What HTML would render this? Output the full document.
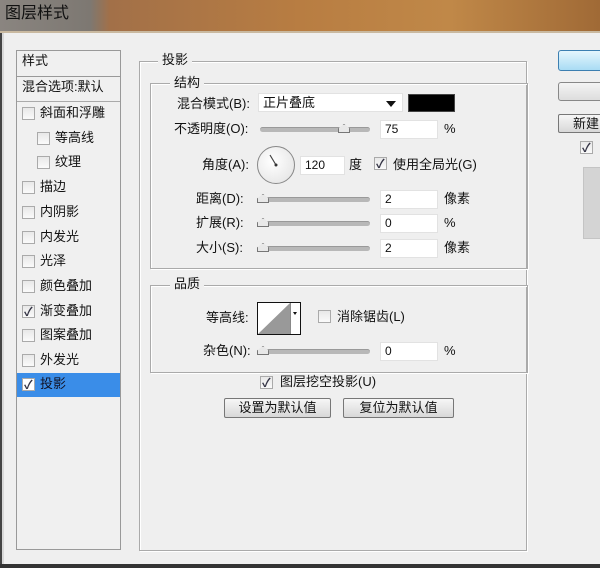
<!DOCTYPE html>
<html><head><meta charset="utf-8"><style>
*{margin:0;padding:0;box-sizing:border-box}
body{width:600px;height:568px;overflow:hidden;background:#efefef;font-family:"Liberation Sans","Noto Sans CJK SC",sans-serif;font-size:13px;color:#111;position:relative}
.a{position:absolute}
.t{position:absolute;white-space:nowrap;line-height:16px}
.cb{position:absolute;width:13px;height:13px;border:1px solid #aaa;background:linear-gradient(#e8e8e8,#fafafa)}
.cb.on::after{content:"✓";position:absolute;left:1px;top:-3px;font-size:12px;color:#334;font-weight:bold}
.in{position:absolute;height:19px;background:#fff;border:1px solid #e2e2e2;padding-left:4px;line-height:17px;font-size:12px}
.sl{position:absolute;height:5px;background:#b8b8b8;border-radius:3px;border-top:1px solid #999}
.th{position:absolute;width:12px;height:9px;border:1px solid #777;background:#e8e8e8;clip-path:polygon(50% 0,100% 50%,100% 100%,0 100%,0 50%)}
.grp{position:absolute;border:1px solid #aaa;box-shadow:inset 1px 1px #fff,1px 1px #fff}
.lg{position:absolute;background:#efefef;padding:0 4px;line-height:16px}
.btn{position:absolute;height:20px;border:1px solid #777;border-radius:2px;background:linear-gradient(#f6f6f6,#d8d8d8);text-align:center;line-height:18px}
</style></head><body>
<div class="a" style="left:0;top:0;width:600px;height:33px;background:linear-gradient(90deg,#8a8580 0,#7d7872 90px,#a27048 110px,#b87d42 300px,#c08848 450px,#a06a36 600px)"></div>
<div class="t" style="left:5px;top:6px;font-size:16px;color:#111">图层样式</div>
<div class="a" style="left:0;top:31px;width:600px;height:2px;background:#c9b9a0"></div>
<div class="a" style="left:0;top:33px;width:4px;height:535px;background:#d8d8d8;border-left:2px solid #444"></div>
<div class="a" style="left:0;top:564px;width:600px;height:4px;background:#333"></div>

<div class="a" style="left:16px;top:50px;width:105px;height:500px;border:1px solid #999;background:#f0f0f0"></div>
<div class="a" style="left:17px;top:76px;width:103px;height:1px;background:#999"></div>
<div class="a" style="left:17px;top:101px;width:103px;height:1px;background:#aaa"></div>
<div class="t" style="left:22px;top:53px">样式</div>
<div class="t" style="left:22px;top:79px">混合选项:默认</div>
<div class="a" style="left:17px;top:373px;width:103px;height:24px;background:#3a8de8"></div>
<div class="cb" style="left:22px;top:107px"></div><div class="t" style="left:40px;top:105px">斜面和浮雕</div>
<div class="cb" style="left:37px;top:132px"></div><div class="t" style="left:55px;top:130px">等高线</div>
<div class="cb" style="left:37px;top:156px"></div><div class="t" style="left:55px;top:154px">纹理</div>
<div class="cb" style="left:22px;top:181px"></div><div class="t" style="left:40px;top:179px">描边</div>
<div class="cb" style="left:22px;top:206px"></div><div class="t" style="left:40px;top:204px">内阴影</div>
<div class="cb" style="left:22px;top:231px"></div><div class="t" style="left:40px;top:229px">内发光</div>
<div class="cb" style="left:22px;top:255px"></div><div class="t" style="left:40px;top:253px">光泽</div>
<div class="cb" style="left:22px;top:280px"></div><div class="t" style="left:40px;top:278px">颜色叠加</div>
<div class="cb on" style="left:22px;top:305px"></div><div class="t" style="left:40px;top:303px">渐变叠加</div>
<div class="cb" style="left:22px;top:329px"></div><div class="t" style="left:40px;top:327px">图案叠加</div>
<div class="cb" style="left:22px;top:354px"></div><div class="t" style="left:40px;top:352px">外发光</div>
<div class="cb on" style="left:22px;top:378px;background:#fff"></div><div class="t" style="left:40px;top:376px;color:#112">投影</div>

<div class="grp" style="left:139px;top:61px;width:388px;height:490px"></div>
<div class="lg" style="left:158px;top:52px">投影</div>
<div class="grp" style="left:150px;top:83px;width:378px;height:186px"></div>
<div class="lg" style="left:170px;top:75px">结构</div>
<div class="grp" style="left:150px;top:285px;width:378px;height:88px"></div>
<div class="lg" style="left:170px;top:276px">品质</div>

<div class="t" style="left:177px;top:96px">混合模式(B):</div>
<div class="in" style="left:258px;top:93px;width:145px;font-size:13px">正片叠底</div>
<div class="a" style="left:386px;top:101px;border-left:5px solid transparent;border-right:5px solid transparent;border-top:6px solid #111"></div>
<div class="a" style="left:408px;top:94px;width:47px;height:18px;background:#000;border:1px solid #444"></div>

<div class="t" style="left:174px;top:121px">不透明度(O):</div>
<div class="sl" style="left:260px;top:127px;width:110px"></div><div class="th" style="left:338px;top:124px"></div>
<div class="in" style="left:380px;top:120px;width:58px">75</div><div class="t" style="left:444px;top:121px">%</div>

<div class="t" style="left:202px;top:157px">角度(A):</div>
<div class="a" style="left:257px;top:146px;width:38px;height:38px;border-radius:50%;border:1px solid #888;background:radial-gradient(circle at 40% 40%,#fff,#e0e0e0)"></div>
<svg class="a" style="left:257px;top:146px" width="38" height="38"><line x1="19" y1="19" x2="13" y2="9" stroke="#444" stroke-width="1.2"/><circle cx="19" cy="19" r="1.5" fill="#333"/></svg>
<div class="in" style="left:300px;top:156px;width:45px">120</div><div class="t" style="left:349px;top:157px">度</div>
<div class="cb on" style="left:374px;top:157px"></div><div class="t" style="left:393px;top:157px">使用全局光(G)</div>

<div class="t" style="left:196px;top:191px">距离(D):</div>
<div class="sl" style="left:260px;top:197px;width:110px"></div><div class="th" style="left:257px;top:194px"></div>
<div class="in" style="left:380px;top:190px;width:58px">2</div><div class="t" style="left:444px;top:191px">像素</div>
<div class="t" style="left:196px;top:215px">扩展(R):</div>
<div class="sl" style="left:260px;top:221px;width:110px"></div><div class="th" style="left:257px;top:218px"></div>
<div class="in" style="left:380px;top:214px;width:58px">0</div><div class="t" style="left:444px;top:215px">%</div>
<div class="t" style="left:196px;top:240px">大小(S):</div>
<div class="sl" style="left:260px;top:246px;width:110px"></div><div class="th" style="left:257px;top:243px"></div>
<div class="in" style="left:380px;top:239px;width:58px">2</div><div class="t" style="left:444px;top:240px">像素</div>

<div class="t" style="left:206px;top:310px">等高线:</div>
<div class="a" style="left:257px;top:302px;width:44px;height:33px;border:1px solid #111;background:#fff"></div>
<svg class="a" style="left:258px;top:303px" width="32" height="31"><polygon points="0,31 32,0 32,31" fill="#999"/></svg>
<div class="a" style="left:290px;top:303px;width:10px;height:31px;border-left:1px solid #888;background:#fff"></div>
<div class="a" style="left:293px;top:312px;border-left:2px solid transparent;border-right:2px solid transparent;border-top:3px solid #111"></div>
<div class="cb" style="left:318px;top:310px"></div><div class="t" style="left:337px;top:309px">消除锯齿(L)</div>

<div class="t" style="left:203px;top:343px">杂色(N):</div>
<div class="sl" style="left:260px;top:349px;width:110px"></div><div class="th" style="left:257px;top:346px"></div>
<div class="in" style="left:380px;top:342px;width:58px">0</div><div class="t" style="left:444px;top:343px">%</div>

<div class="cb on" style="left:260px;top:376px"></div><div class="t" style="left:280px;top:374px">图层挖空投影(U)</div>
<div class="btn" style="left:224px;top:398px;width:107px">设置为默认值</div>
<div class="btn" style="left:343px;top:398px;width:111px">复位为默认值</div>

<div class="a" style="left:558px;top:50px;width:50px;height:21px;border:1px solid #3c7fb1;border-radius:3px;background:linear-gradient(#e5f6fd,#a9dcf4)"></div>
<div class="a" style="left:558px;top:82px;width:50px;height:19px;border:1px solid #888;border-radius:3px;background:linear-gradient(#f4f4f4,#ddd)"></div>
<div class="btn" style="left:558px;top:114px;width:50px;height:19px;text-align:left;padding-left:14px">新建</div>
<div class="cb on" style="left:580px;top:141px"></div>
<div class="a" style="left:583px;top:167px;width:20px;height:72px;background:#d4d4d4;border:1px solid #c4c4c4"></div>
</body></html>
